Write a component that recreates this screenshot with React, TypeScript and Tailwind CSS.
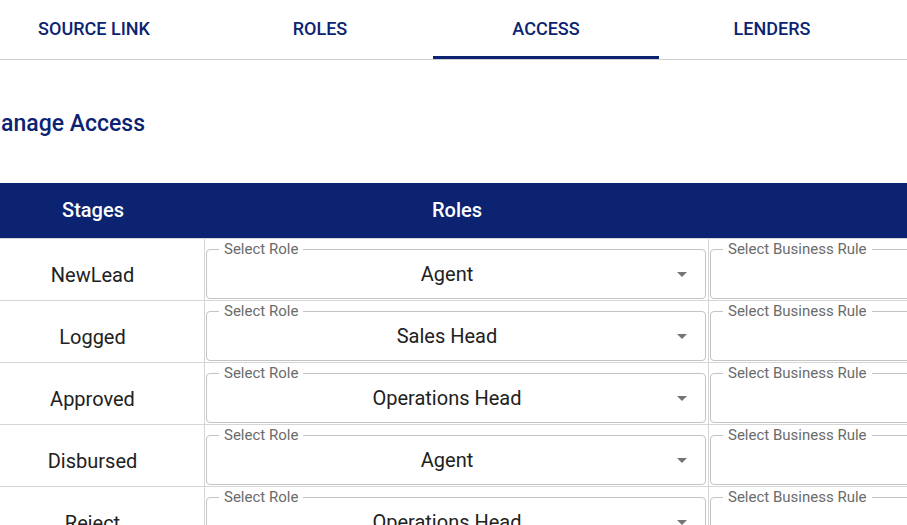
import React from 'react';

const TABS = ['Source Link', 'Roles', 'Access', 'Lenders'];

const ROWS = [
  { stage: 'NewLead', role: 'Agent' },
  { stage: 'Logged', role: 'Sales Head' },
  { stage: 'Approved', role: 'Operations Head' },
  { stage: 'Disbursed', role: 'Agent' },
  { stage: 'Reject', role: 'Operations Head' },
];

function OutlinedSelect({ label, value, showArrow }: { label: string; value?: string; showArrow?: boolean }) {
  return (
    <div className="relative h-[50px] rounded-[4px] border border-[#c4c4c4]">
      <span className="absolute left-[12px] top-[-10px] bg-white px-[5px] text-[15px] leading-[18px] text-[#6b6b6b]">
        {label}
      </span>
      <div className="flex h-full items-center pl-[14px] pr-[32px]">
        <span className="flex-1 text-center text-[20px] text-[#212121]">{value}</span>
      </div>
      {showArrow && (
        <svg className="absolute right-[18px] top-[22px]" width="10" height="5" viewBox="0 0 10 5">
          <path d="M0 0 L10 0 L5 5 Z" fill="#757575" />
        </svg>
      )}
    </div>
  );
}

export default function App() {
  return (
    <div className="h-[525px] w-[907px] overflow-hidden bg-white" style={{ fontFamily: 'Roboto, "Liberation Sans", sans-serif' }}>
      <div className="ml-[-19px] w-[1500px]">
        <div className="flex h-[60px] border-b border-[#cfcfcf]">
          {TABS.map((t) => (
            <div
              key={t}
              className={`flex w-[226px] items-center justify-center text-[18px] font-medium uppercase text-[#0b2371] ${
                t === 'Access' ? 'border-b-[3px] border-[#0b2371]' : 'pb-[3px]'
              }`}
            >
              {t}
            </div>
          ))}
        </div>

        <h2 className="mt-[49px] h-[30px] text-[23px] font-medium leading-[30px] text-[#0b2371]">Manage Access</h2>

        <div className="mt-[44px]">
          <div className="flex h-[55px] bg-[#0b2371] pb-[1px] text-[20px] font-medium text-white">
            <div className="flex w-[224px] items-center justify-center">Stages</div>
            <div className="flex w-[504px] items-center justify-center">Roles</div>
            <div className="flex w-[700px] items-center justify-center">Business Rule</div>
          </div>
          {ROWS.map((r) => (
            <div key={r.stage} className="flex h-[62px] border-t border-[#d6d6d6]">
              <div className="flex w-[224px] items-center justify-center border-r border-[#d6d6d6] pt-[10px] text-[20px] text-[#212121]">
                {r.stage}
              </div>
              <div className="w-[504px] border-r border-[#d6d6d6] pl-[1px] pr-[2px] pt-[10px]">
                <OutlinedSelect label="Select Role" value={r.role} showArrow />
              </div>
              <div className="w-[700px] pl-[1px] pr-[2px] pt-[10px]">
                <OutlinedSelect label="Select Business Rule" />
              </div>
            </div>
          ))}
        </div>
      </div>
    </div>
  );
}
